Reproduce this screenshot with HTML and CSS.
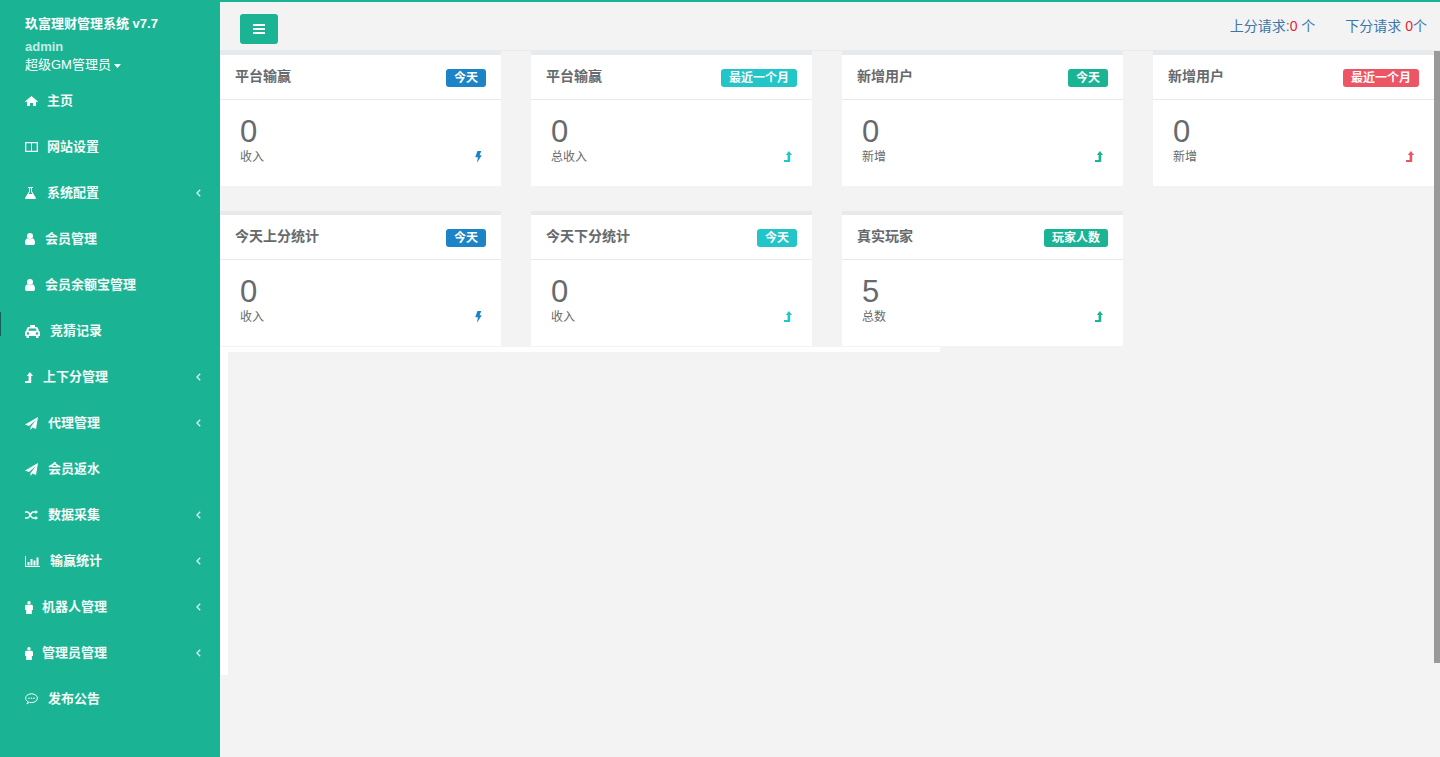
FILE: index.html
```html
<!DOCTYPE html>
<html lang="zh-CN">
<head>
<meta charset="utf-8">
<title>玖富理财管理系统</title>
<link rel="stylesheet" href="styles.css">
</head>
<body>
<div class="app">
  <aside class="sidebar">
    <div class="profile">
      <div class="brand">玖富理财管理系统 v7.7</div>
      <div class="user">admin</div>
      <div class="role">超级GM管理员<svg class="caret" width="7" height="4" viewBox="0 0 7 4"><path d="M0 0h7L3.5 4z"/></svg></div>
    </div>
    <ul class="nav">
      <li class="item"><span class="ico w22"><svg width="13" height="10" viewBox="0 0 13 10"><path d="M6.5 0 13 5.5l-.6.8L11 5.2V10H8V7H5v3H2V5.2L.6 6.3 0 5.5z"/></svg></span>主页</li>
      <li class="item"><span class="ico w22"><svg width="13" height="10" viewBox="0 0 13 10"><path fill-rule="evenodd" d="M0 0h13v10H0zM1.300 1.300v7.400H6V1.300zM7 1.300v7.400h4.700V1.300z"/></svg></span>网站设置</li>
      <li class="item"><span class="ico w22"><svg width="11" height="12" viewBox="0 0 11 12"><path fill-rule="evenodd" d="M3 0h5v1H7v3.500l3.800 6.300c.4.600 0 1.200-.7 1.200H.9c-.7 0-1.100-.6-.7-1.200L4 4.500V1H3zM5 1.200v3.600L3.600 7h3.800L6 4.800V1.200z"/></svg></span>系统配置<svg class="chev" width="5" height="8" viewBox="0 0 5 8"><path d="M4.200.7 1 4l3.200 3.300"/></svg></li>
      <li class="item"><span class="ico w20"><svg width="10" height="12" viewBox="0 0 10 12"><circle cx="5" cy="3" r="3"/><path d="M0 10c0-3 1-4.500 2.500-4.800.7.600 1.500 1 2.500 1s1.800-.4 2.500-1C9 5.500 10 7 10 10c0 1.200-.8 2-1.800 2H1.800C.8 12 0 11.200 0 10z"/></svg></span>会员管理</li>
      <li class="item"><span class="ico w20"><svg width="10" height="12" viewBox="0 0 10 12"><circle cx="5" cy="3" r="3"/><path d="M0 10c0-3 1-4.500 2.500-4.800.7.600 1.500 1 2.500 1s1.800-.4 2.500-1C9 5.500 10 7 10 10c0 1.200-.8 2-1.800 2H1.800C.8 12 0 11.200 0 10z"/></svg></span>会员余额宝管理</li>
      <li class="item item-mark"><span class="ico w25"><svg width="15" height="13" viewBox="0 0 15 13"><path fill-rule="evenodd" d="M5 0h5v2h1.500c.6 0 1 .3 1.200.8L14 6c.7.4 1 1 1 1.700V11h-1.500v2H11v-2H4v2H1.500v-2H0V7.700C0 7 .3 6.400 1 6l1.300-3.200c.2-.5.6-.8 1.200-.8H5zM3.300 5.800h8.400l-.9-2.400H4.200zM3 7.300a1.200 1.200 0 1 0 0 2.400 1.200 1.200 0 0 0 0-2.400zM12 7.300a1.200 1.200 0 1 0 0 2.400 1.200 1.200 0 0 0 0-2.400z"/></svg></span>竞猜记录</li>
      <li class="item"><span class="ico w18"><svg width="8" height="11" viewBox="0 0 8 11"><path d="M4.900 0 8 4H6.200V11H0V9H3.600V4H1.800z"/></svg></span>上下分管理<svg class="chev" width="5" height="8" viewBox="0 0 5 8"><path d="M4.200.7 1 4l3.200 3.300"/></svg></li>
      <li class="item"><span class="ico w23"><svg width="13" height="13" viewBox="0 0 13 13"><path d="M13 0 11 12 7.500 10.500 5.500 13V10L11 3 4 9 0 7.500z"/></svg></span>代理管理<svg class="chev" width="5" height="8" viewBox="0 0 5 8"><path d="M4.200.7 1 4l3.200 3.300"/></svg></li>
      <li class="item"><span class="ico w23"><svg width="13" height="13" viewBox="0 0 13 13"><path d="M13 0 11 12 7.500 10.500 5.500 13V10L11 3 4 9 0 7.500z"/></svg></span>会员返水</li>
      <li class="item"><span class="ico w23"><svg width="13" height="10" viewBox="0 0 13 10"><path class="line" d="M0 2h2.500c2.500 0 3 6 5.500 6h3M0 8h2.500c2.500 0 3-6 5.500-6h3"/><path d="M10.500 0 13 2l-2.500 2zM10.500 6 13 8l-2.500 2z"/></svg></span>数据采集<svg class="chev" width="5" height="8" viewBox="0 0 5 8"><path d="M4.200.7 1 4l3.200 3.300"/></svg></li>
      <li class="item"><span class="ico w25"><svg width="15" height="11" viewBox="0 0 15 11"><path d="M0 0h1v10h14v1H0zM2.500 6h2v3.500h-2zM5.500 3h2v6.500h-2zM8.500 4.500h2v5h-2zM11.500 1.500h2v8h-2z"/></svg></span>输赢统计<svg class="chev" width="5" height="8" viewBox="0 0 5 8"><path d="M4.200.7 1 4l3.200 3.300"/></svg></li>
      <li class="item"><span class="ico w17"><svg width="8" height="13" viewBox="0 0 8 13"><circle cx="4" cy="1.700" r="1.700"/><path d="M1.500 3.800h5c.8 0 1.500.6 1.500 1.500V9H6.800v4H1.200V9H0V5.300c0-.9.7-1.500 1.500-1.500z"/></svg></span>机器人管理<svg class="chev" width="5" height="8" viewBox="0 0 5 8"><path d="M4.200.7 1 4l3.200 3.300"/></svg></li>
      <li class="item"><span class="ico w17"><svg width="8" height="13" viewBox="0 0 8 13"><circle cx="4" cy="1.700" r="1.700"/><path d="M1.500 3.800h5c.8 0 1.500.6 1.500 1.500V9H6.800v4H1.200V9H0V5.300c0-.9.7-1.500 1.500-1.500z"/></svg></span>管理员管理<svg class="chev" width="5" height="8" viewBox="0 0 5 8"><path d="M4.200.7 1 4l3.200 3.300"/></svg></li>
      <li class="item"><span class="ico w23"><svg width="13" height="12" viewBox="0 0 13 12"><path class="line thin" d="M3.200 8.700C1.600 8 .6 6.700.6 5.200.6 2.800 3.200.8 6.500.8s5.900 2 5.900 4.400-2.600 4.400-5.900 4.400c-.8 0-1.500-.1-2.200-.3L1.800 11c.7-.7 1.200-1.400 1.400-2.300z"/><circle cx="4" cy="5.200" r=".8"/><circle cx="6.500" cy="5.200" r=".8"/><circle cx="9" cy="5.200" r=".8"/></svg></span>发布公告</li>
    </ul>
  </aside>
  <div class="main">
    <header class="topbar">
      <button class="menu-btn" type="button" aria-label="菜单"><svg width="12" height="10" viewBox="0 0 12 10"><path d="M0 0h12v2H0zM0 4h12v2H0zM0 8h12v2H0z"/></svg></button>
      <div class="requests">
        <span class="req">上分请求:<em>0</em> 个</span>
        <span class="req">下分请求 <em>0</em>个</span>
      </div>
    </header>
    <div class="body">
      <div class="panel">
        <div class="grid">
          <section class="card">
            <div class="card-title"><h5>平台输赢</h5><span class="tag blue">今天</span></div>
            <div class="card-body"><div class="num">0</div><div class="meta"><span>收入</span><svg class="stat bolt blue-i" width="7" height="12" viewBox="0 0 6 11"><path d="M2 0h3.500L4 3.800h2L1.500 11l1-5.200H0z"/></svg></div></div>
          </section>
          <section class="card">
            <div class="card-title"><h5>平台输赢</h5><span class="tag cyan">最近一个月</span></div>
            <div class="card-body"><div class="num">0</div><div class="meta"><span>总收入</span><svg class="stat up cyan-i" width="8" height="11" viewBox="0 0 8 11"><path d="M4.900 0 8 4H6.200V11H0V9H3.600V4H1.800z"/></svg></div></div>
          </section>
          <section class="card">
            <div class="card-title"><h5>新增用户</h5><span class="tag green">今天</span></div>
            <div class="card-body"><div class="num">0</div><div class="meta"><span>新增</span><svg class="stat up green-i" width="8" height="11" viewBox="0 0 8 11"><path d="M4.900 0 8 4H6.200V11H0V9H3.600V4H1.800z"/></svg></div></div>
          </section>
          <section class="card">
            <div class="card-title"><h5>新增用户</h5><span class="tag red">最近一个月</span></div>
            <div class="card-body"><div class="num">0</div><div class="meta"><span>新增</span><svg class="stat up red-i" width="8" height="11" viewBox="0 0 8 11"><path d="M4.900 0 8 4H6.200V11H0V9H3.600V4H1.800z"/></svg></div></div>
          </section>
          <section class="card">
            <div class="card-title"><h5>今天上分统计</h5><span class="tag blue">今天</span></div>
            <div class="card-body"><div class="num">0</div><div class="meta"><span>收入</span><svg class="stat bolt blue-i" width="7" height="12" viewBox="0 0 6 11"><path d="M2 0h3.500L4 3.800h2L1.500 11l1-5.200H0z"/></svg></div></div>
          </section>
          <section class="card">
            <div class="card-title"><h5>今天下分统计</h5><span class="tag cyan">今天</span></div>
            <div class="card-body"><div class="num">0</div><div class="meta"><span>收入</span><svg class="stat up cyan-i" width="8" height="11" viewBox="0 0 8 11"><path d="M4.900 0 8 4H6.200V11H0V9H3.600V4H1.800z"/></svg></div></div>
          </section>
          <section class="card">
            <div class="card-title"><h5>真实玩家</h5><span class="tag green">玩家人数</span></div>
            <div class="card-body"><div class="num">5</div><div class="meta"><span>总数</span><svg class="stat up green-i" width="8" height="11" viewBox="0 0 8 11"><path d="M4.900 0 8 4H6.200V11H0V9H3.600V4H1.800z"/></svg></div></div>
          </section>
        </div>
        <div class="frame"></div>
      </div>
      <div class="thumb"></div>
    </div>
  </div>
</div>
</body>
</html>
```

FILE: styles.css
```css
* { box-sizing: border-box; }
html, body { margin: 0; height: 100%; overflow: hidden; }
body {
  font-family: "Liberation Sans", "Noto Sans CJK SC", sans-serif;
  font-size: 13px;
  color: #676a6c;
  background: #f3f3f4;
}
.app { display: flex; height: 757px; }

/* sidebar */
.sidebar { width: 220px; flex: none; background: #1ab394; color: #fff; }
.profile { height: 78px; padding: 15px 0 0 25px; line-height: 18px; }
.brand { font-weight: 700; }
.user { margin-top: 5px; font-weight: 700; color: #c4ede3; }
.role { display: flex; align-items: center; }
.caret { margin: 1px 0 0 3px; fill: #fff; }
.nav { list-style: none; margin: 0; padding: 0; }
.item {
  position: relative;
  display: flex;
  align-items: center;
  height: 46px;
  padding: 0 19px 0 25px;
  font-weight: 700;
  line-height: 18px;
  color: #f4fbf9;
}
.item-mark::before {
  content: "";
  position: absolute;
  left: 0;
  top: 4px;
  width: 1px;
  height: 24px;
  background: #10635a;
}
.ico { display: flex; align-items: center; flex: none; }
.ico svg { display: block; fill: #fff; }
.ico .line { fill: none; stroke: #fff; stroke-width: 1.5; }
.ico .thin { stroke-width: 1; }
.w17 { width: 17px; }
.w18 { width: 18px; }
.w20 { width: 20px; }
.w22 { width: 22px; }
.w23 { width: 23px; }
.w25 { width: 25px; }
.chev { margin-left: auto; fill: none; stroke: #d5f2ea; stroke-width: 1.4; }

/* top bar */
.main { flex: 1; min-width: 0; border-top: 2px solid #1ab394; }
.topbar {
  display: flex;
  justify-content: space-between;
  height: 49px;
  padding: 12px 13px 0 20px;
  border-bottom: 1px solid #e7eaec;
}
.menu-btn {
  display: flex;
  align-items: center;
  justify-content: center;
  width: 38px;
  height: 30px;
  padding: 0;
  border: 0;
  border-radius: 3px;
  background: #1ab394;
}
.menu-btn svg { fill: #fff; }
.requests { display: flex; gap: 30px; padding-top: 3px; font-size: 14px; line-height: 18px; color: #3a76a8; }
.req em { font-style: normal; color: #ed1c2e; }

/* content */
.body { display: flex; }
.panel { width: 1214px; flex: none; }
.grid {
  display: grid;
  grid-template-columns: repeat(4, 281px);
  column-gap: 30px;
  row-gap: 25px;
}
.card { border-top: 4px solid #e7eaec; background: #fff; }
.card-title {
  display: flex;
  justify-content: space-between;
  align-items: flex-start;
  height: 45px;
  padding: 14px 15px 0;
  border-bottom: 1px solid #e7eaec;
}
.card-title h5 { margin: 0; font-size: 14px; font-weight: 700; line-height: 14px; color: #676a6c; }
.tag {
  height: 18px;
  padding: 0 8px;
  border-radius: 3px;
  font-size: 12px;
  font-weight: 700;
  line-height: 18px;
  color: #fff;
}
.blue { background: #1c84c6; }
.cyan { background: #23c6c8; }
.green { background: #1ab394; }
.red { background: #ed5565; }
.card-body { height: 86px; padding: 17px 20px 0; }
.num { font-size: 31px; line-height: 30px; color: #676a6c; }
.meta { display: flex; justify-content: space-between; align-items: center; margin-top: 4px; font-size: 12px; line-height: 12px; }
.stat { display: block; }
.bolt { margin-right: -1px; }
.up { margin-top: -2px; }
.blue-i { fill: #1c84c6; }
.cyan-i { fill: #23c6c8; }
.green-i { fill: #1ab394; }
.red-i { fill: #ed5565; }
.frame {
  width: 720px;
  height: 328px;
  margin-top: 1px;
  border-top: 5px solid #fff;
  border-left: 8px solid #fff;
}
.thumb { width: 6px; height: 612px; flex: none; background: #999; }
```
